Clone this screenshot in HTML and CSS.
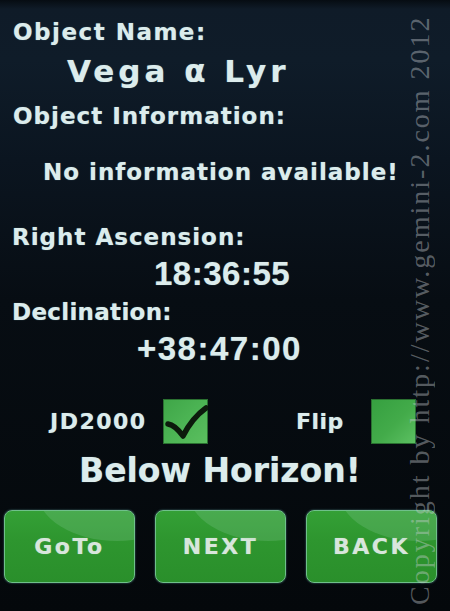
FILE: index.html
```html
<!DOCTYPE html>
<html>
<head>
<meta charset="utf-8">
<link rel="stylesheet" href="styles.css">
</head>
<body>
<div class="screen">
  <div class="label r-name">Object Name:</div>
  <div class="name">Vega α Lyr</div>
  <div class="label r-info">Object Information:</div>
  <div class="info">No information available!</div>
  <div class="label r-ra">Right Ascension:</div>
  <div class="value v-ra">18:36:55</div>
  <div class="label r-dec">Declination:</div>
  <div class="value v-dec">+38:47:00</div>
  <div class="options">
    <span class="opt-label jd">JD2000</span>
    <span class="check checked">
      <svg viewBox="0 0 45 45" width="45" height="45"><path d="M5 25 Q12 26 20 37 Q29 19 43 9" fill="none" stroke="#0c1a0c" stroke-width="5.5" stroke-linecap="round" stroke-linejoin="round"/></svg>
    </span>
    <span class="opt-label flip">Flip</span>
    <span class="check flipbox"></span>
  </div>
  <div class="warn">Below Horizon!</div>
  <div class="buttons">
    <div class="btn">GoTo</div>
    <div class="btn">NEXT</div>
    <div class="btn">BACK</div>
  </div>
</div>
<div class="watermark">Copyright by http://www.gemini-2.com 2012</div>
</body>
</html>
```
FILE: styles.css
```css
html, body {
  margin: 0;
  padding: 0;
}
body {
  width: 450px;
  height: 611px;
  overflow: hidden;
  position: relative;
  background: linear-gradient(to bottom, #060c12 0px, #0f1b28 9px, #0f1c29 60px, #0b1520 160px, #070d13 300px, #04080b 611px);
  font-family: "DejaVu Sans", sans-serif;
  font-weight: bold;
  color: #dcecec;
}
.screen {
  display: flex;
  flex-direction: column;
}
.screen > div {
  white-space: nowrap;
  text-shadow: 0 0 1px rgba(160, 220, 230, 0.6);
}
.label {
  font-size: 23px;
  letter-spacing: 1px;
  line-height: 30px;
}
.r-name { margin-top: 17px; padding-left: 13px; letter-spacing: 1.5px; }
.name {
  font-size: 31px;
  letter-spacing: 4px;
  line-height: 40px;
  margin-top: 4px;
  padding-left: 67px;
}
.r-info { margin-top: 10px; padding-left: 13px; }
.info {
  font-size: 23px;
  letter-spacing: 1px;
  line-height: 30px;
  margin-top: 26px;
  padding-left: 43px;
}
.r-ra { margin-top: 35px; padding-left: 12px; }
.value {
  font-family: "Liberation Sans", sans-serif;
  font-size: 33px;
  line-height: 36px;
  letter-spacing: 0.5px;
}
.v-ra { margin-top: 4px; padding-left: 154px; }
.r-dec { margin-top: 5px; padding-left: 12px; letter-spacing: 0.3px; }
.v-dec { margin-top: 4px; padding-left: 137px; letter-spacing: 1.5px; }
.options {
  display: flex;
  align-items: center;
  height: 45px;
  margin-top: 32px;
  padding-left: 50px;
}
.opt-label {
  font-size: 22px;
  letter-spacing: 0.5px;
}
.jd { width: 113px; letter-spacing: 1.5px; }
.flip { width: 75px; margin-left: 88px; }
.check {
  width: 45px;
  height: 45px;
  box-sizing: border-box;
  border: 1px solid #2a7030;
  display: block;
}
.check svg { display: block; margin: -1px; }
.checked {
  background: linear-gradient(135deg, #3fa648 0%, #4cb454 50%, #5bbf5f 100%);
}
.flipbox {
  background: linear-gradient(135deg, #36a040 0%, #43ab4a 55%, #5cc062 100%);
}
.warn {
  font-size: 33px;
  letter-spacing: 0;
  line-height: 36px;
  margin-top: 9px;
  padding-left: 79px;
}
.buttons {
  display: flex;
  gap: 20px;
  margin-top: 21px;
  padding-left: 4px;
}
.btn {
  position: relative;
  overflow: hidden;
  width: 131px;
  height: 73px;
  box-sizing: border-box;
  border: 1px solid #6fc08a;
  border-radius: 8px;
  background: linear-gradient(to bottom, #34a036 0%, #2e962f 40%, #2a8f2b 100%);
  box-shadow: 0 0 2px rgba(120, 200, 200, 0.6);
  display: flex;
  align-items: center;
  justify-content: center;
  font-size: 22px;
  letter-spacing: 2.5px;
  color: #d8e6dc;
  text-shadow: 0 0 1px rgba(220, 240, 230, 0.5);
}
.btn::before {
  content: "";
  position: absolute;
  left: 25%;
  top: -70px;
  width: 160px;
  height: 100px;
  border-radius: 50%;
  background: rgba(150, 210, 170, 0.22);
}
.watermark {
  position: absolute;
  left: 404px;
  top: 15px;
  width: 32px;
  height: 590px;
  writing-mode: vertical-rl;
  transform: rotate(180deg);
  font-family: "Liberation Serif", serif;
  font-weight: normal;
  font-size: 28px;
  letter-spacing: 2px;
  line-height: 32px;
  white-space: nowrap;
  color: rgba(200, 205, 210, 0.42);
}
```
